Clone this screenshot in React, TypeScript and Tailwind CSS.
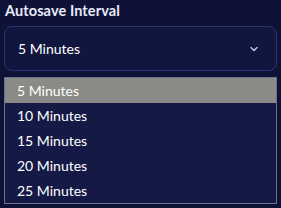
import { ChevronDown } from 'lucide-react';

const OPTIONS = ['5 Minutes', '10 Minutes', '15 Minutes', '20 Minutes', '25 Minutes'];

export default function App() {
  return (
    <div
      className="w-[281px] h-[208px] bg-[#0e1236] px-1 pt-[2px] overflow-hidden"
      style={{ fontFamily: 'Lato, "Noto Sans", sans-serif' }}
    >
      <div className="text-[14.5px] font-bold text-[#e8eaf6] leading-[18px] pl-px tracking-[0.1px]">
        Autosave Interval
      </div>

      <div className="mt-[6px] h-[45px] rounded-lg border border-[#2c3275] bg-[#11163f] flex items-center justify-between pl-[13px] pr-[16px]">
        <span className="text-[14px] text-white">5 Minutes</span>
        <ChevronDown size={12} strokeWidth={2.5} className="text-[#c9cdf0]" />
      </div>

      <div className="mt-[6px] w-[273px] border border-[#6d7190] bg-[#141a45]">
        {OPTIONS.map((o, i) => (
          <div
            key={o}
            className={
              'h-[25px] flex items-center pl-[12px] text-[14px] ' +
              (i === 0 ? 'bg-[#8a8a86] text-white' : 'text-white')
            }
          >
            {o}
          </div>
        ))}
      </div>
    </div>
  );
}
